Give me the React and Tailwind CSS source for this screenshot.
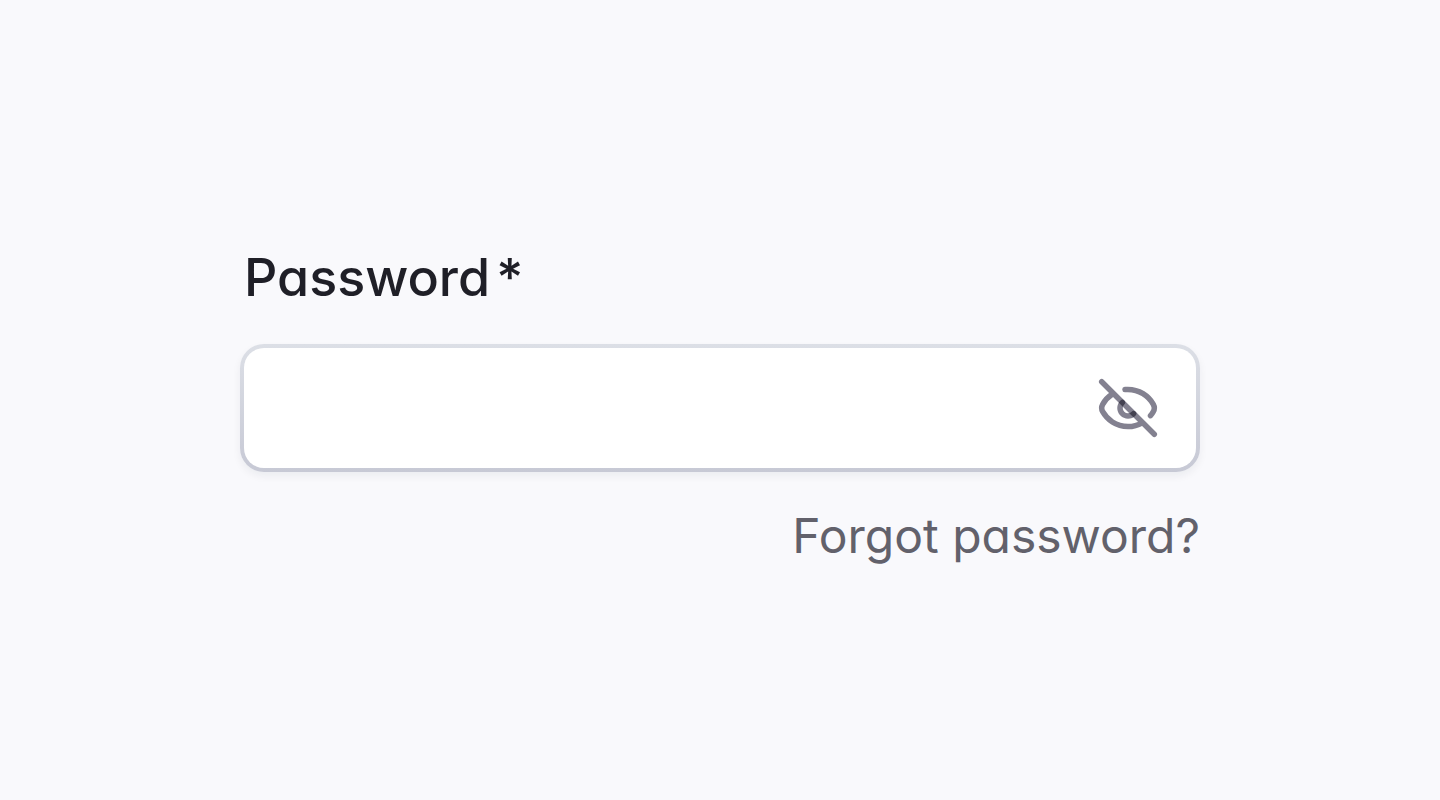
import React, { useState } from "react";

const EyeOffIcon = () => {
  return (
    <svg
      className="size-16 isolate"
      viewBox="0 0 64 64"
      fill="none"
      stroke="#838190"
      strokeWidth="5.5"
      strokeLinecap="round"
      strokeLinejoin="round"
      aria-hidden="true"
    >
      <path d="M5.7 5.7L58.3 58.3" />
      <path d="M29 13.5C43.5 12.3 53.1 20.7 57.3 28.3C58.7 30.8 58.7 33.2 57.3 35.7C56.6 37 55.7 38.4 54.5 39.7" />
      <path d="M15.9 18.4C11.6 21.2 8.7 24.8 6.7 28.3C5.3 30.8 5.3 33.2 6.7 35.7C11 43.4 19.8 50.6 32 50.6C37.4 50.6 42.2 49.1 46.2 46.8" />
      <path
        className="mix-blend-multiply"
        d="M26.4 26.4C24.9 27.8 24 29.8 24 32C24 36.4 27.6 40 32 40C34.2 40 36.2 39.1 37.6 37.6"
      />
    </svg>
  );
};

const App = () => {
  const [password, setPassword] = useState("");
  const [visible, setVisible] = useState(false);

  return (
    <main className="min-h-screen px-60 flex flex-col justify-center bg-[#f9f9fc] font-['Inter',sans-serif] [font-feature-settings:'cv11']">
      <form className="flex flex-col" onSubmit={(e) => e.preventDefault()}>
        <label
          htmlFor="password"
          className="pl-1 flex gap-1.5 text-[52px] leading-[76px] font-medium text-[#1f1f27]"
        >
          Password
          <span>*</span>
        </label>

        <div className="mt-7 p-1 rounded-3xl bg-linear-to-b from-[#dcdfe6] to-[#c7c9d5] shadow-[0_4px_8px_rgba(25,28,50,0.06)]">
          <div className="h-30 pr-9 flex items-center rounded-[20px] bg-white">
            <input
              id="password"
              name="password"
              type={visible ? "text" : "password"}
              className="h-full min-w-0 flex-1 px-9 rounded-[20px] text-5xl text-[#1f1f27] outline-none"
              value={password}
              onChange={(e) => setPassword(e.target.value)}
              required
            />
            <button
              type="button"
              aria-label={visible ? "Hide password" : "Show password"}
              onClick={() => setVisible((prev) => !prev)}
            >
              <EyeOffIcon />
            </button>
          </div>
        </div>

        <a
          href="#forgot"
          className="mt-10 self-end text-[48px] leading-[48px] text-[#62616b]"
        >
          Forgot password?
        </a>
      </form>
    </main>
  );
};

export default App;
